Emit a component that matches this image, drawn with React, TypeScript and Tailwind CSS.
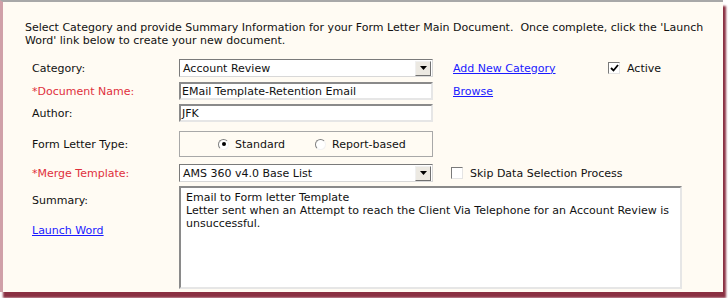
import React from "react";

function Arrow() {
    return (
        <div className="flex h-[15px] w-[16px] items-center justify-center border border-t-[#f0f0f0] border-l-[#f0f0f0] border-r-[#707070] border-b-[#707070] bg-[#ece9e2]">
            <svg width="7" height="4" viewBox="0 0 7 4">
                <path d="M0 0h7L3.5 4z" fill="#000" />
            </svg>
        </div>
    );
}

function SelectBox({ value }: { value: string }) {
    return (
        <div className="flex h-[18px] w-[254px] items-center justify-between border border-t-[#7a7a7a] border-l-[#7a7a7a] border-r-[#d8d8d8] border-b-[#d8d8d8] bg-white pl-[3px] pr-[1px]">
            <span>{value}</span>
            <Arrow />
        </div>
    );
}

function TextBox({ value }: { value: string }) {
    return (
        <div className="flex h-[18px] w-[254px] items-center border-2 border-t-[#8a8a8a] border-l-[#8a8a8a] border-r-[#e6e6e6] border-b-[#e6e6e6] bg-white pl-[1px]">
            {value}
        </div>
    );
}

function Radio({ checked }: { checked?: boolean }) {
    return (
        <div className="flex h-[11px] w-[11px] items-center justify-center rounded-full border border-t-[#808080] border-l-[#808080] border-r-[#f2f2f2] border-b-[#f2f2f2] bg-white">
            {checked && <div className="h-[4px] w-[4px] rounded-full bg-black" />}
        </div>
    );
}

function Check({ checked }: { checked?: boolean }) {
    return (
        <div className="flex h-[12px] w-[12px] items-center justify-center border border-t-[#7a7a7a] border-l-[#7a7a7a] border-r-[#e4e4e4] border-b-[#e4e4e4] bg-white">
            {checked && (
                <svg width="9" height="8" viewBox="0 0 9 8">
                    <path d="M1 4l2.5 2.5L8 1" stroke="#000" strokeWidth="1.8" fill="none" />
                </svg>
            )}
        </div>
    );
}

export default function App() {
    return (
        <div className="h-[298px] w-[728px] overflow-hidden bg-white">
            <div
                className="flex h-[292px] w-[723px] flex-col border-t-2 border-l-[3px] border-t-[#a8a8a8] border-l-[#d0a0a8] bg-[#fffbf3] pl-[22px] pt-[19px] text-[11px] leading-[13px] text-[#111] shadow-[3px_6px_2px_rgba(125,25,45,0.9)]"
                style={{ fontFamily: "Verdana, 'DejaVu Sans', sans-serif" }}
            >
                <p className="w-[680px]">
                    Select Category and provide Summary Information for your Form Letter Main Document.&nbsp; Once complete, click the 'Launch Word' link below to create your new document.
                </p>

                <div className="mt-[12px] flex flex-col pl-[7px]">
                    <div className="flex h-[18px] items-center">
                        <span className="w-[147px]">Category:</span>
                        <SelectBox value="Account Review" />
                        <a className="ml-[20px] w-[155px] text-[#1a1aff] underline">Add New Category</a>
                        <Check checked />
                        <span className="ml-[7px]">Active</span>
                    </div>

                    <div className="mt-[5px] flex h-[18px] items-center">
                        <span className="w-[147px] text-[#e0303c]">*Document Name:</span>
                        <TextBox value="EMail Template-Retention Email" />
                        <a className="ml-[20px] text-[#1a1aff] underline">Browse</a>
                    </div>

                    <div className="mt-[4px] flex h-[18px] items-center">
                        <span className="w-[147px]">Author:</span>
                        <TextBox value="JFK" />
                    </div>

                    <div className="mt-[9px] flex h-[26px] items-center">
                        <span className="w-[147px]">Form Letter Type:</span>
                        <div className="flex h-[26px] w-[254px] items-center border border-[#a8a8a8] pl-[38px]">
                            <Radio checked />
                            <span className="ml-[6px]">Standard</span>
                            <span className="ml-[30px]">
                                <Radio />
                            </span>
                            <span className="ml-[6px]">Report-based</span>
                        </div>
                    </div>

                    <div className="mt-[7px] flex h-[18px] items-center">
                        <span className="w-[147px] text-[#e0303c]">*Merge Template:</span>
                        <SelectBox value="AMS 360 v4.0 Base List" />
                        <span className="ml-[18px]">
                            <Check />
                        </span>
                        <span className="ml-[7px]">Skip Data Selection Process</span>
                    </div>

                    <div className="mt-[4px] flex">
                        <div className="flex w-[147px] flex-col pt-[8px]">
                            <span>Summary:</span>
                            <a className="mt-[17px] text-[#1a1aff] underline">Launch Word</a>
                        </div>
                        <div className="h-[103px] w-[503px] border-2 border-t-[#8a8a8a] border-l-[#8a8a8a] border-r-[#e6e6e6] border-b-[#e6e6e6] bg-white px-[5px] pt-[3px]">
                            Email to Form letter Template
                            <br />
                            Letter sent when an Attempt to reach the Client Via Telephone for an Account Review is unsuccessful.
                        </div>
                    </div>
                </div>
            </div>
        </div>
    );
}
